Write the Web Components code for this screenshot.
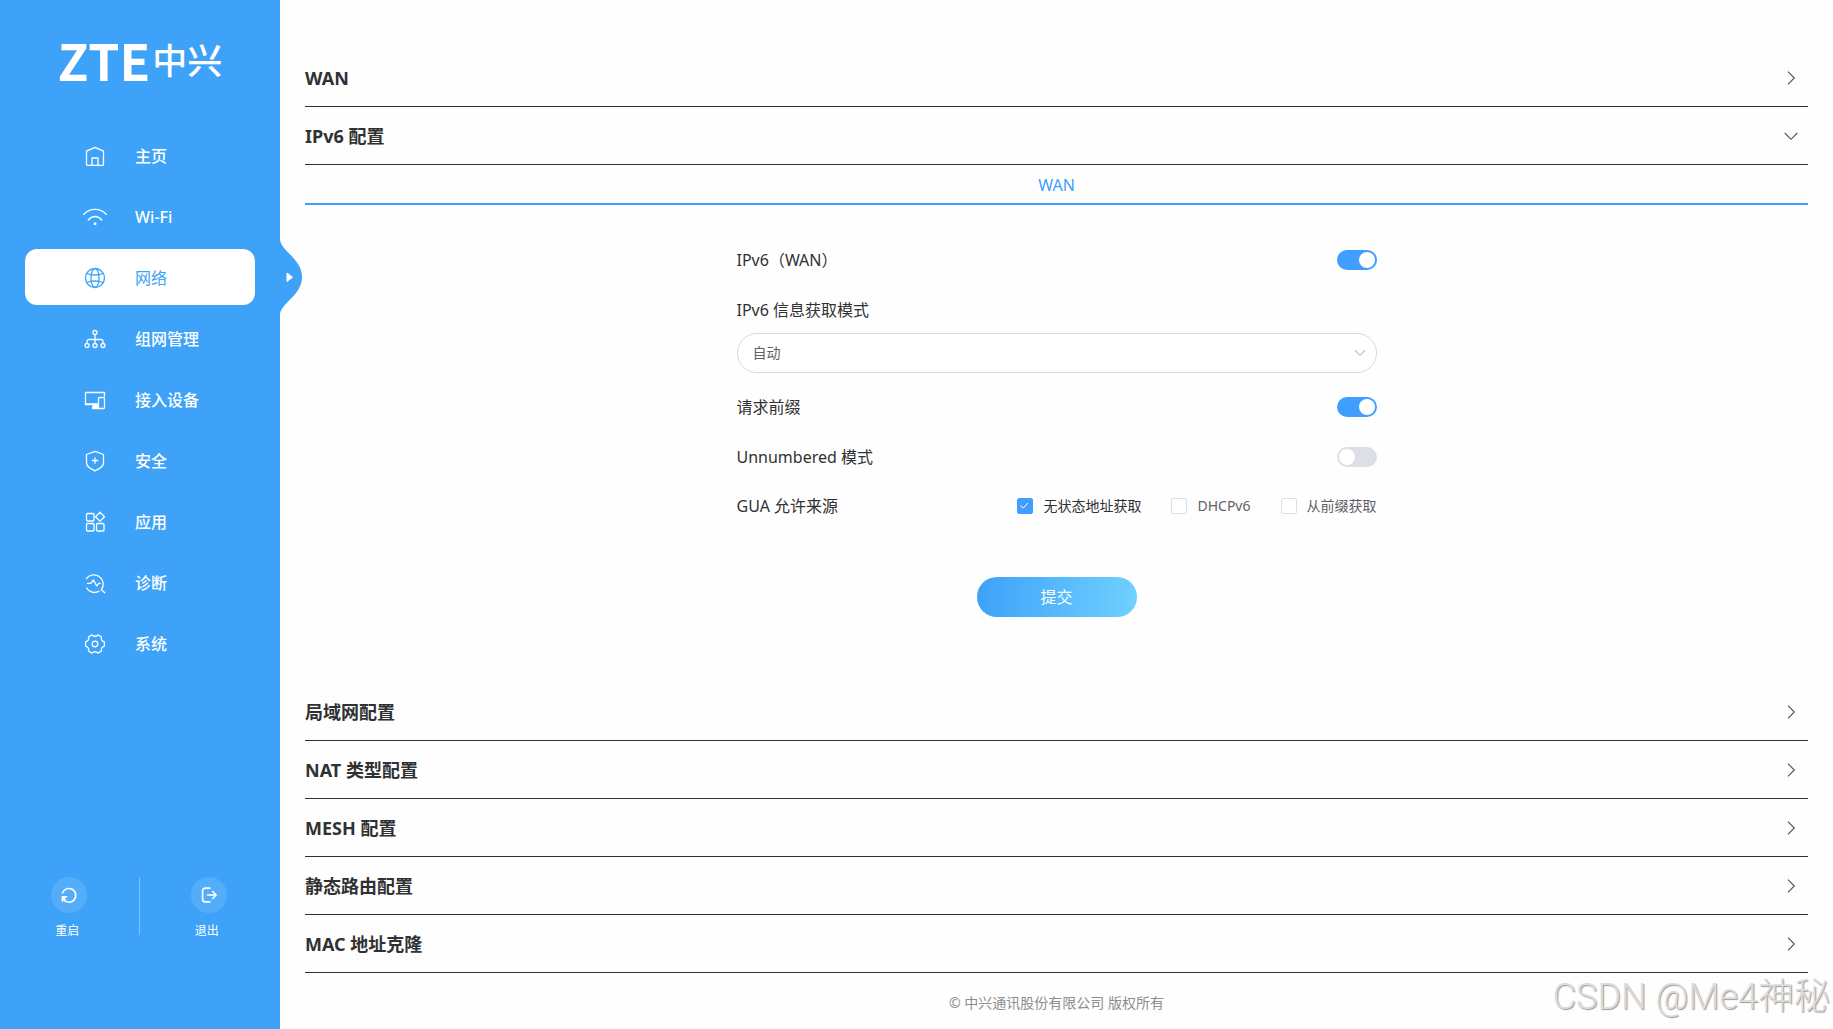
<!DOCTYPE html>
<html lang="zh-CN">
<head>
<meta charset="utf-8">
<meta name="viewport" content="width=device-width, initial-scale=1">
<title>ZTE 中兴</title>
<style>
  :root {
    --brand: #3da2f8;
    --accent: #409eff;
    --ink: #303133;
    --muted: #606266;
  }
  body {
    margin: 0;
    background: #fefefe;
    color: var(--ink);
    font: 16px/24px "Noto Sans", "Noto Sans CJK SC", sans-serif;
  }
</style>
</head>
<body>
<router-app></router-app>

<script>
const define = (name, html, init) => {
  const template = document.createElement('template');
  template.innerHTML = html;
  customElements.define(name, class extends HTMLElement {
    constructor() {
      super();
      this.attachShadow({ mode: 'open' }).append(template.content.cloneNode(true));
    }
    connectedCallback() {
      if (init && !this.ready) { this.ready = true; init(this, this.shadowRoot); }
    }
  });
};

const ICONS = {
  home: '<path d="M12 3.4 3.5 7.2V20.4a1 1 0 0 0 1 1h15a1 1 0 0 0 1-1V7.2zM9 21.2V14h6v7.2"/>',
  wifi: '<path d="M.8 9.2c6.4-6.400 16-6.400 22.400 0M5.300 15c3.800-4.700 9.600-4.700 13.400 0"/><circle cx="12" cy="18.700" r="1.500" fill="currentColor" stroke="none"/>',
  globe: '<circle cx="12" cy="12" r="9.500"/><ellipse cx="12" cy="12" rx="4" ry="9.500"/><path d="M3.700 7.500c5 1.800 11.600 1.800 16.600 0M3.700 16.500c5-1.800 11.600-1.800 16.600 0"/>',
  mesh: '<circle cx="12" cy="5.500" r="2"/><circle cx="4" cy="18.500" r="2"/><circle cx="12" cy="18.500" r="2"/><circle cx="20" cy="18.500" r="2"/><path d="M12 7.500v9M4 16.500v-2a2 2 0 0 1 2-2h12a2 2 0 0 1 2 2v2"/>',
  devices: '<path d="M21.500 8V4.500h-19v12H14"/><path d="M2.500 16h12.500M10.500 16.500h4.500v4h-5.500z" fill="currentColor"/><rect x="15.500" y="9.500" width="6" height="11" rx="1"/>',
  shield: '<path d="M12 2.300 20.500 5.500v8.300c0 2.300-1.500 4-3.500 5.400L12 21.800l-5-2.600c-2-1.400-3.500-3.100-3.500-5.400V5.500zM12 8.800v5.400M9.300 11.500h5.400"/>',
  apps: '<rect x="3.500" y="3.500" width="7.500" height="7.500" rx="1"/><rect x="3.500" y="13.500" width="7.500" height="7.500" rx="1"/><rect x="13.500" y="13.500" width="7.500" height="7.500" rx="1"/><path d="m17 2.300 4.500 4.500-4.500 4.500-4.500-4.500z"/>',
  diagnose: '<path d="M3.500 7.500a9.300 9.300 0 1 1 14.800 11.300l3.500 3M3.500 17a9.300 9.300 0 0 0 12.500 3.300M4.500 12.300h3.300l2.700-3.300 3.200 6 2-2.700h1.500"/>',
  gear: '<path d="M18.300 4.800 15 2.900Q12 5.600 9 2.900L5.700 4.800Q6.300 8.700 2.600 9.900V14.100Q6.300 15.300 5.700 19.200L9 21.100Q12 18.400 15 21.100L18.300 19.200Q17.700 15.300 21.400 14.100V9.900Q17.700 8.700 18.300 4.800Z"/><circle cx="12" cy="12" r="2.800"/>',
  restart: '<path d="M5 9.500a7.500 7.500 0 1 1 1 7.500M4.800 18.500v-4.500h4.500M5 14.200l2.500 2.500"/>',
  logout: '<path d="M13 4.500H8a3 3 0 0 0-3 3v9a3 3 0 0 0 3 3h5M10.500 12h9M16 8.200l3.800 3.800-3.800 3.800"/>'
};

/* Line icon picked by its name attribute */
define('line-icon', `
  <style>
    :host { display: block; width: 24px; height: 24px; flex: none; }
    svg { display: block; width: 100%; height: 100%; fill: none; stroke: currentColor;
          stroke-width: var(--stroke, 1.3); stroke-linecap: round; stroke-linejoin: round; }
  </style>
  <svg viewBox="0 0 24 24" aria-hidden="true"></svg>`,
  (el, root) => { root.querySelector('svg').innerHTML = ICONS[el.getAttribute('name')]; });

const makeIcon = name => {
  const icon = document.createElement('line-icon');
  icon.setAttribute('name', name);
  return icon;
};

define('brand-logo', `
  <style>
    :host { display: flex; align-items: center; justify-content: center; gap: 2px; height: 58px; color: #fff; }
    .latin { font: 700 50px/58px "Noto Sans CJK SC", sans-serif; }
    .han { font: 500 35px/58px "Noto Sans CJK SC", sans-serif; }
  </style>
  <span class="latin">ZTE</span><span class="han">中兴</span>`);

define('nav-item', `
  <style>
    :host { display: block; position: relative; }
    a { display: flex; align-items: center; gap: 28px; height: 56px; box-sizing: border-box;
        padding: 2px 16px 0 58px; border-radius: 12px; color: #fff; text-decoration: none; font-weight: 500; }
    svg { display: none; }
    :host([active]) a { background: #fff; color: var(--brand); font-weight: 400; }
    :host([active]) svg { display: block; position: absolute; left: 100%; top: 50%;
        margin: -40px 0 0 24px; width: 24px; height: 80px; }
  </style>
  <a href="#"><slot></slot></a>
  <svg viewBox="0 0 24 80" aria-hidden="true">
    <path d="M0 0H1V3C3 15 23 22 23 40S3 65 1 77V80H0z" fill="#3da2f8"/>
    <path d="M8 36v8.500l5.500-4.200z" fill="#fff" stroke="#fff" stroke-linejoin="round"/>
  </svg>`,
  (el, root) => {
    root.querySelector('a').prepend(makeIcon(el.getAttribute('icon')));
    if (el.hasAttribute('active')) root.querySelector('a').setAttribute('aria-current', 'page');
  });

define('round-action', `
  <style>
    :host { display: flex; flex: 1; justify-content: center; }
    button { display: flex; flex-direction: column; align-items: center; gap: 9px; padding: 0;
             border: 0; background: none; color: #fff; font: inherit; font-size: 12px; line-height: 18px; cursor: pointer; }
    .disc { display: grid; place-items: center; width: 36px; height: 36px; border-radius: 50%;
            background: rgba(255, 255, 255, .12); }
    line-icon { width: 22px; height: 22px; --stroke: 1.8; }
    .text { padding-right: 4px; }
  </style>
  <button type="button"><span class="disc"></span><span class="text"><slot></slot></span></button>`,
  (el, root) => root.querySelector('.disc').append(makeIcon(el.getAttribute('icon'))));

define('side-bar', `
  <style>
    :host { display: flex; flex-direction: column; box-sizing: border-box; width: 280px; flex: none;
            padding: 30px 0 89px; background: var(--brand); color: #fff; }
    nav { display: flex; flex-direction: column; gap: 5px; padding: 39px 25px 0; }
    .actions { display: flex; margin-top: auto; padding-right: 2px; }
    .actions i { width: 1px; height: 58px; background: rgba(255, 255, 255, .35); }
  </style>
  <brand-logo></brand-logo>
  <nav>
    <nav-item icon="home">主页</nav-item>
    <nav-item icon="wifi">Wi-Fi</nav-item>
    <nav-item icon="globe" active>网络</nav-item>
    <nav-item icon="mesh">组网管理</nav-item>
    <nav-item icon="devices">接入设备</nav-item>
    <nav-item icon="shield">安全</nav-item>
    <nav-item icon="apps">应用</nav-item>
    <nav-item icon="diagnose">诊断</nav-item>
    <nav-item icon="gear">系统</nav-item>
  </nav>
  <div class="actions">
    <round-action icon="restart">重启</round-action>
    <i></i>
    <round-action icon="logout">退出</round-action>
  </div>`);

/* Collapsible section: heading text in the "title" slot, body in the default slot */
define('fold-section', `
  <style>
    :host { display: block; }
    h2 { margin: 0; font: inherit; }
    button { display: flex; align-items: center; justify-content: space-between; width: 100%; height: 58px;
             padding: 0 10px 0 0; border: 0; border-bottom: 1px solid var(--ink); background: none;
             color: var(--ink); font: inherit; font-size: 18px; font-weight: 700; text-align: left; cursor: pointer; }
    svg { width: 14px; height: 14px; fill: none; stroke: #505153; stroke-width: 1.1; }
    :host([open]) svg { transform: rotate(90deg); }
    .body { display: none; }
    :host([open]) .body { display: block; }
  </style>
  <h2><button type="button" aria-expanded="false"><slot name="title"></slot>
    <svg viewBox="0 0 14 14" aria-hidden="true"><path d="m4 .7 6.300 6.300L4 13.300"/></svg></button></h2>
  <div class="body"><slot></slot></div>`,
  (el, root) => {
    const button = root.querySelector('button');
    const sync = () => button.setAttribute('aria-expanded', el.hasAttribute('open'));
    button.addEventListener('click', () => { el.toggleAttribute('open'); sync(); });
    sync();
  });

define('switch-row', `
  <style>
    :host { display: flex; align-items: center; justify-content: space-between; height: 50px; }
    input { appearance: none; display: flex; align-items: center; box-sizing: border-box; width: 40px; height: 20px;
            margin: 0; padding: 2px; border-radius: 10px; background: #dcdfe6; cursor: pointer; }
    input::before { content: ""; width: 16px; height: 16px; border-radius: 50%; background: #fff; }
    input:checked { justify-content: flex-end; background: var(--accent); }
  </style>
  <label for="toggle"><slot></slot></label>
  <input id="toggle" type="checkbox" role="switch">`,
  (el, root) => { root.querySelector('input').checked = el.hasAttribute('on'); });

define('select-row', `
  <style>
    :host { display: block; padding-bottom: 9px; }
    label { display: flex; align-items: center; height: 48px; padding-top: 1px; box-sizing: border-box; }
    .box { display: grid; align-items: center; }
    select, svg { grid-area: 1 / 1; }
    select { appearance: none; width: 100%; height: 40px; padding: 0 40px 0 15px; border: 1px solid #d6d8da;
             border-radius: 20px; background: #fff; color: var(--muted); font: inherit; font-size: 14px; }
    svg { justify-self: end; width: 12px; height: 12px; margin-right: 11px; fill: none; stroke: #c0c4cc;
          stroke-width: 1.2; pointer-events: none; }
  </style>
  <label for="mode"><slot></slot></label>
  <div class="box">
    <select id="mode"><option>自动</option></select>
    <svg viewBox="0 0 12 12" aria-hidden="true"><path d="m.8 3.200 5.200 5.200 5.200-5.200"/></svg>
  </div>`);

define('check-option', `
  <style>
    :host { display: block; }
    label { display: flex; align-items: center; gap: 10px; color: var(--muted); font-size: 14px; line-height: 20px; cursor: pointer; }
    label:has(:checked) { color: var(--ink); }
    .mark { display: grid; place-items: center; }
    input, svg { grid-area: 1 / 1; }
    input { appearance: none; box-sizing: border-box; width: 16px; height: 16px; margin: 0;
            border: 1px solid #dcdfe6; border-radius: 2px; background: #fff; }
    input:checked { border-color: var(--accent); background: var(--accent); }
    svg { width: 16px; height: 16px; fill: none; stroke: none; pointer-events: none; }
    input:checked + svg { stroke: #fff; }
  </style>
  <label><span class="mark"><input type="checkbox">
    <svg viewBox="0 0 16 16" aria-hidden="true"><path d="m3.500 7.500 2.700 2.700 4.700-5.200"/></svg></span><slot></slot></label>`,
  (el, root) => { root.querySelector('input').checked = el.hasAttribute('checked'); });

define('ipv6-form', `
  <style>
    :host { display: block; }
    .tabs { display: flex; border-bottom: 2px solid var(--accent); }
    .tabs button { flex: 1; height: 38px; padding: 1px 0 0; border: 0; background: none; color: var(--accent);
                   font: inherit; cursor: pointer; }
    form { display: flex; flex-direction: column; max-width: 640px; margin: 0 auto; padding: 30px 0 66px; }
    .sources { display: flex; align-items: center; justify-content: space-between; height: 48px; }
    .options { display: flex; gap: 30px; }
    .submit { align-self: center; width: 160px; height: 40px; margin-top: 47px; padding: 0; border: 0; border-radius: 20px;
              background: linear-gradient(90deg, #3da2f8, #70d0ff); color: #fff; font: inherit; cursor: pointer; }
  </style>
  <div class="tabs" role="tablist"><button type="button" role="tab" aria-selected="true">WAN</button></div>
  <form>
    <switch-row on>IPv6（WAN）</switch-row>
    <select-row>IPv6 信息获取模式</select-row>
    <switch-row on>请求前缀</switch-row>
    <switch-row>Unnumbered 模式</switch-row>
    <div class="sources" role="group" aria-labelledby="source">
      <span id="source">GUA 允许来源</span>
      <div class="options">
        <check-option checked>无状态地址获取</check-option>
        <check-option>DHCPv6</check-option>
        <check-option>从前缀获取</check-option>
      </div>
    </div>
    <button class="submit" type="button">提交</button>
  </form>`);

define('router-app', `
  <style>
    :host { display: flex; min-height: 100vh; position: relative; overflow: hidden; }
    main { display: flex; flex-direction: column; flex: 1; min-width: 0; padding: 49px 25px 0; }
    footer { padding: 20px 0 15px; text-align: center; color: #8c8d90; font-size: 14px; line-height: 20px; }
    .watermark { position: absolute; right: 3px; bottom: 10px; color: #dcdcdc; white-space: nowrap;
                 font: 300 36px/44px Roboto, "Noto Sans CJK SC", sans-serif; text-shadow: 1px 1px 1px #999; pointer-events: none; }
  </style>
  <side-bar></side-bar>
  <main>
    <fold-section><span slot="title">WAN</span></fold-section>
    <fold-section open><span slot="title">IPv6 配置</span><ipv6-form></ipv6-form></fold-section>
    <fold-section><span slot="title">局域网配置</span></fold-section>
    <fold-section><span slot="title">NAT 类型配置</span></fold-section>
    <fold-section><span slot="title">MESH 配置</span></fold-section>
    <fold-section><span slot="title">静态路由配置</span></fold-section>
    <fold-section><span slot="title">MAC 地址克隆</span></fold-section>
    <footer>© 中兴通讯股份有限公司 版权所有</footer>
  </main>
  <div class="watermark">CSDN @Me4神秘</div>`);
</script>
</body>
</html>
